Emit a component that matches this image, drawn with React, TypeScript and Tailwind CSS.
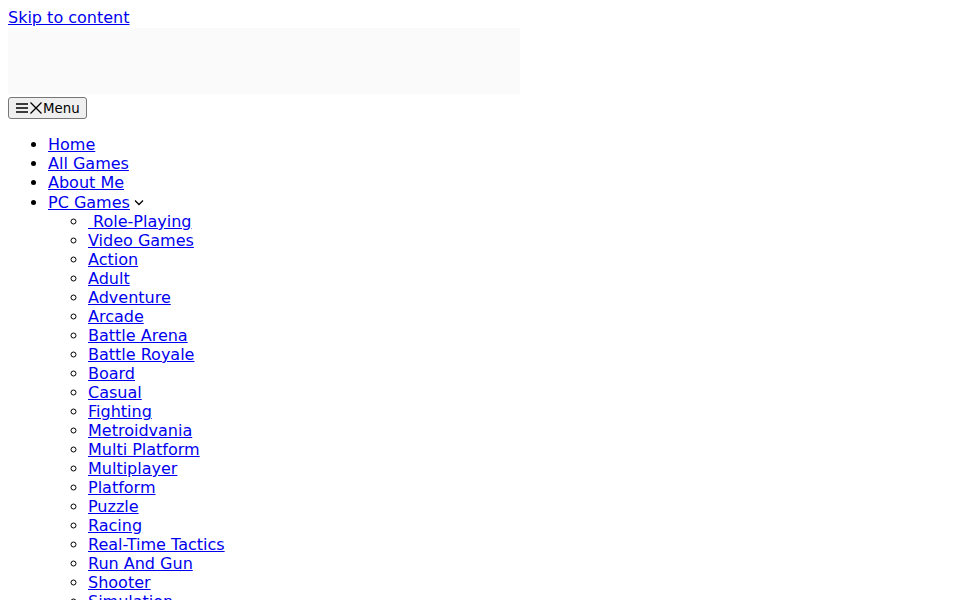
import type React from 'react'

const genres = [
  '\u00a0Role-Playing',
  'Video Games',
  'Action',
  'Adult',
  'Adventure',
  'Arcade',
  'Battle Arena',
  'Battle Royale',
  'Board',
  'Casual',
  'Fighting',
  'Metroidvania',
  'Multi Platform',
  'Multiplayer',
  'Platform',
  'Puzzle',
  'Racing',
  'Real-Time Tactics',
  'Run And Gun',
  'Shooter',
  'Simulation',
  'Sports',
  'Strategy',
  'Survival',
]

const linkCls = 'text-[#0000ee] underline'

const App: React.FC = () => {
  return (
    <div
      className="min-h-screen bg-white p-2 text-[16px] leading-[19px] text-black"
      style={{ fontFamily: '"DejaVu Sans", sans-serif' }}
    >
      <a href="#content" className={linkCls}>
        Skip to content
      </a>

      {/* site logo area (image missing) */}
      <div className="mt-px h-[66px] w-[512px] bg-[#fafafa]" />

      {/* mobile menu toggle */}
      <button className="mt-[3px] flex h-[22px] items-center rounded-[3px] border border-[#767676] bg-[#efefef] px-[6px] text-[13.33px] leading-none">
        <svg width="14" height="14" viewBox="0 0 14 14" fill="none" stroke="black" strokeWidth="1.3">
          <path d="M1 3h12M1 7h12M1 11h12" />
        </svg>
        <svg width="14" height="14" viewBox="0 0 14 14" fill="none" stroke="black" strokeWidth="1.3">
          <path d="M1.5 1.5l11 11M12.5 1.5l-11 11" />
        </svg>
        <span className="pt-px">Menu</span>
      </button>

      <ul className="mt-4 list-disc pl-10">
        <li>
          <a href="#" className={linkCls}>Home</a>
        </li>
        <li>
          <a href="#" className={linkCls}>All Games</a>
        </li>
        <li>
          <a href="#" className={linkCls}>About Me</a>
        </li>
        <li className="pt-px">
          <a href="#" className={linkCls}>PC Games</a>
          <svg className="ml-[4px] inline-block align-[2px]" width="10" height="7" viewBox="0 0 10 7" fill="none" stroke="black" strokeWidth="1.3">
            <path d="M1 1.5l4 4 4-4" />
          </svg>
          <ul className="list-[circle] pl-10">
            {genres.map((g) => (
              <li key={g}>
                <a href="#" className={linkCls}>{g}</a>
              </li>
            ))}
          </ul>
        </li>
      </ul>
    </div>
  )
}

export default App
